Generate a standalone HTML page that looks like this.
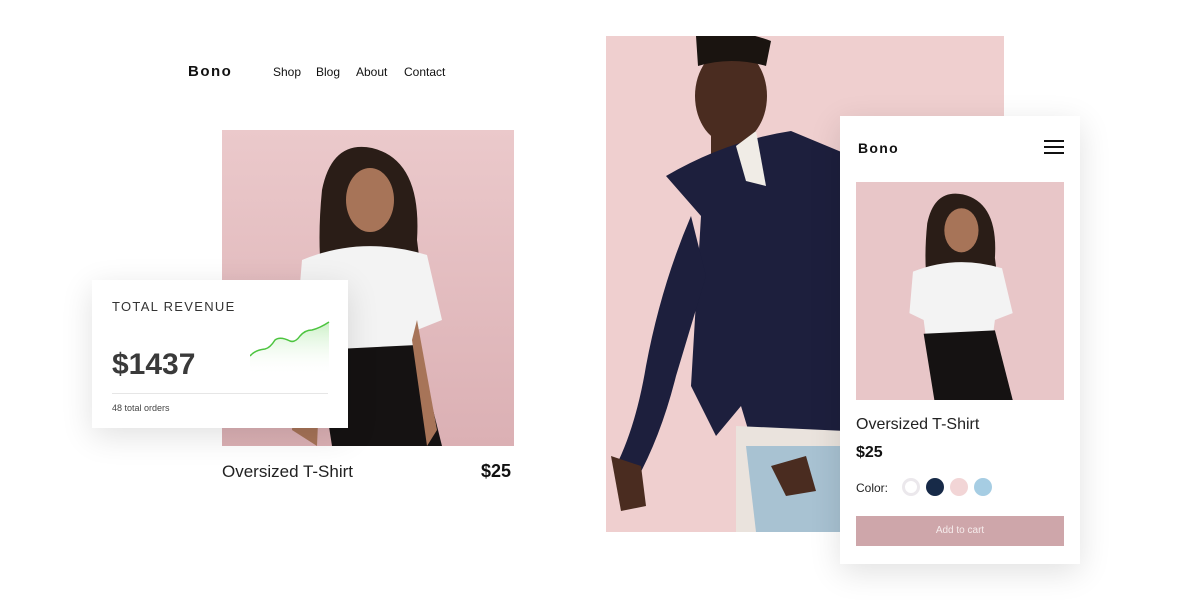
<!DOCTYPE html>
<html><head><style>
body{margin:0;width:1200px;height:600px;background:#fff;position:relative;overflow:hidden;font-family:"Liberation Sans",sans-serif;color:#111}
.a{position:absolute}
</style></head><body>
<div class="a" style="left:188px;top:63px;font-size:15px;font-weight:bold;letter-spacing:1.5px">Bono</div>
<div class="a" style="left:273px;top:65px;font-size:12px">Shop</div>
<div class="a" style="left:316px;top:65px;font-size:12px">Blog</div>
<div class="a" style="left:356px;top:65px;font-size:12px">About</div>
<div class="a" style="left:404px;top:65px;font-size:12px">Contact</div>

<svg class="a" style="left:222px;top:130px" width="292" height="316" viewBox="0 0 292 316">
<defs><linearGradient id="bg1" x1="0" y1="0" x2="0" y2="1"><stop offset="0" stop-color="#ebc9cb"/><stop offset="1" stop-color="#dbb0b4"/></linearGradient></defs>
<rect width="292" height="316" fill="url(#bg1)"/>
<path d="M100 60 Q110 10 150 18 Q200 30 195 110 L200 150 L100 150 Q95 110 100 60Z" fill="#2a1d17"/>
<ellipse cx="148" cy="70" rx="24" ry="32" fill="#a77458"/>
<path d="M80 130 Q140 105 205 125 L220 190 L195 200 L190 240 L100 240 L95 200 L75 190Z" fill="#f3f3f3"/>
<path d="M95 220 L195 215 L220 316 L110 316Z" fill="#151212"/>
<path d="M80 190 L70 300 L95 316 L100 200Z" fill="#a77458"/>
<path d="M195 190 L215 300 L205 316 L190 210Z" fill="#a77458"/>
</svg>
<div class="a" style="left:222px;top:462px;font-size:17px;color:#222">Oversized T-Shirt</div>
<div class="a" style="left:481px;top:461px;font-size:18px;font-weight:bold">$25</div>

<div class="a" style="left:92px;top:280px;width:256px;height:148px;background:#fff;box-shadow:0 8px 30px rgba(0,0,0,.12)">
<div class="a" style="left:20px;top:19px;font-size:13px;letter-spacing:1.3px;color:#333">TOTAL REVENUE</div>
<div class="a" style="left:20px;top:68px;font-size:30px;font-weight:bold;color:#3a3a3a">$1437</div>
<svg class="a" style="left:158px;top:40px" width="80" height="56"><defs><linearGradient id="g" x1="0" y1="0" x2="0" y2="1"><stop offset="0" stop-color="#a8e6a0" stop-opacity=".6"/><stop offset="1" stop-color="#fff" stop-opacity="0"/></linearGradient></defs>
<path d="M0 36 Q5 30 15 29 Q20 28 25 20 Q30 16 40 21 Q45 23 50 16 Q55 10 62 10 Q70 8 79 2 L79 56 L0 56Z" fill="url(#g)"/>
<path d="M0 36 Q5 30 15 29 Q20 28 25 20 Q30 16 40 21 Q45 23 50 16 Q55 10 62 10 Q70 8 79 2" fill="none" stroke="#4cc43f" stroke-width="1.5"/></svg>
<div class="a" style="left:20px;top:113px;width:216px;height:1px;background:#e6e6e6"></div>
<div class="a" style="left:20px;top:123px;font-size:9px;color:#444">48 total orders</div>
</div>

<svg class="a" style="left:606px;top:36px" width="398" height="496" viewBox="0 0 398 496">
<rect width="398" height="496" fill="#efcfcf"/>
<ellipse cx="125" cy="60" rx="36" ry="48" fill="#4a2c20"/>
<path d="M90 0 Q125 -10 165 5 L160 30 Q125 20 92 30Z" fill="#1a1410"/>
<path d="M105 95 L150 95 L150 130 L105 130Z" fill="#4a2c20"/>
<path d="M60 140 Q120 105 185 95 L245 120 L240 420 L150 420 L135 370 L110 400 L85 350 L95 180Z" fill="#1d1f3d"/>
<path d="M85 180 Q55 250 40 330 Q30 390 10 430 L30 445 Q55 400 70 340 L100 240Z" fill="#1d1f3d"/>
<path d="M5 420 L35 430 L40 470 L15 475 Z" fill="#4a2c20"/>
<path d="M130 390 L240 395 L245 496 L130 496Z" fill="#eae3dd"/>
<path d="M140 410 L235 410 L240 496 L150 496Z" fill="#a8c2d2"/>
<path d="M130 110 L150 95 L160 150 L140 145Z" fill="#f0ece6"/>
<path d="M165 430 L200 420 L210 455 L180 460Z" fill="#4a2c20"/>
</svg>

<div class="a" style="left:840px;top:116px;width:240px;height:448px;background:#fff;box-shadow:0 8px 30px rgba(0,0,0,.12)">
<div class="a" style="left:18px;top:24px;font-size:14px;font-weight:bold;letter-spacing:1.3px">Bono</div>
<div class="a" style="left:204px;top:24px;width:20px;height:2px;background:#111;box-shadow:0 6px 0 #111,0 12px 0 #111"></div>
<svg class="a" style="left:16px;top:66px" width="208" height="218" viewBox="0 0 292 316" preserveAspectRatio="none">
<rect width="292" height="316" fill="#e8c6c8"/>
<path d="M100 60 Q110 10 150 18 Q200 30 195 110 L200 150 L100 150 Q95 110 100 60Z" fill="#2a1d17"/>
<ellipse cx="148" cy="70" rx="24" ry="32" fill="#a77458"/>
<path d="M80 130 Q140 105 205 125 L220 190 L195 200 L190 240 L100 240 L95 200 L75 190Z" fill="#f3f3f3"/>
<path d="M95 220 L195 215 L220 316 L110 316Z" fill="#151212"/>
</svg>
<div class="a" style="left:16px;top:300px;font-size:16px;color:#222">Oversized T-Shirt</div>
<div class="a" style="left:16px;top:328px;font-size:16px;font-weight:bold">$25</div>
<div class="a" style="left:16px;top:365px;font-size:12px;color:#222">Color:</div>
<div class="a" style="left:62px;top:362px;width:12px;height:12px;border:3px solid #ebe8ec;border-radius:50%"></div>
<div class="a" style="left:86px;top:362px;width:18px;height:18px;background:#172a48;border-radius:50%"></div>
<div class="a" style="left:110px;top:362px;width:18px;height:18px;background:#f2d5d6;border-radius:50%"></div>
<div class="a" style="left:134px;top:362px;width:18px;height:18px;background:#a6cde3;border-radius:50%"></div>
<div class="a" style="left:16px;top:400px;width:208px;height:30px;background:#cea6aa;color:#f6ecec;font-size:10px;text-align:center;line-height:30px">Add to cart</div>
</div>
</body></html>
